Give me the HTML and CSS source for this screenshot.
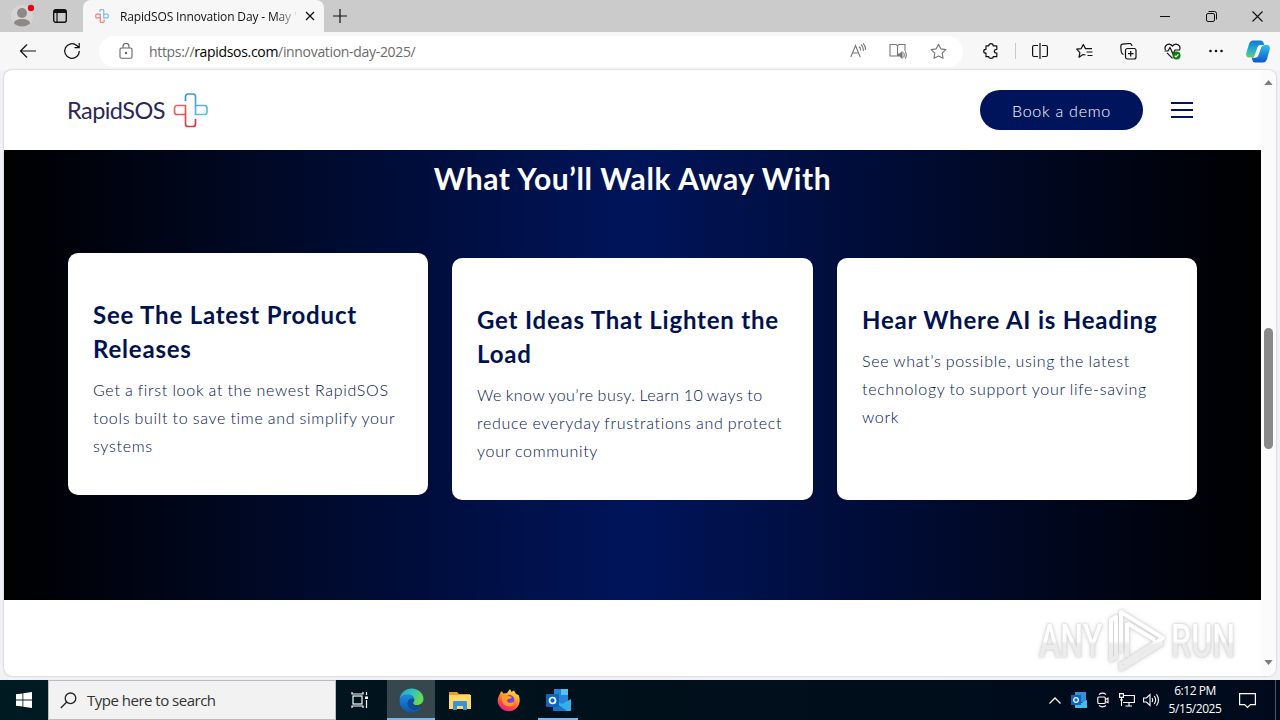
FILE: index.html
```html
<!DOCTYPE html>
<html lang="en">

<head>
    <meta charset="UTF-8">
    <meta name="viewport" content="width=device-width, initial-scale=1.0">
    <link rel="stylesheet" href="styles.css">
    <title>RapidSOS Innovation Day</title>
</head>

<body>
    <div class="tabbar">
        <div class="profile">
            <svg width="24" height="24" viewBox="0 0 24 24"><circle cx="12" cy="12" r="11" fill="#d8d4d3"/><circle cx="12" cy="9" r="5" fill="#8c8988"/><path d="M4 19.500c0-3 3-4.500 8-4.500s8 1.500 8 4.500c-2 2-5 3-8 3s-6-1-8-3z" fill="#8c8988"/><circle cx="21" cy="4" r="3.200" fill="#e30613"/></svg>
        </div>
        <div class="workspaces">
            <svg width="16" height="16" viewBox="0 0 16 16" fill="none" stroke="#111"><rect x="1.700" y="1.700" width="12.600" height="12.600" rx="2" stroke-width="1.400"/><path d="M2 3.500h12" stroke-width="3"/><path d="M5 3v11" stroke-width="1.200"/></svg>
        </div>
        <div class="tab">
            <svg width="14" height="14" viewBox="0 0 36 36" fill="none" stroke-width="3" opacity=".85"><path d="M12.500 8V4a2.500 2.500 0 0 1 2.500-2.500h5A2.500 2.500 0 0 1 22.500 4v19h9a2.500 2.500 0 0 0 2.500-2.500v-5a2.500 2.500 0 0 0-2.500-2.500h-9" stroke="#58b9de"/><path d="M23.500 27v5a2.500 2.500 0 0 1-2.500 2.500h-5a2.500 2.500 0 0 1-2.500-2.500V13h-9A2.500 2.500 0 0 0 2 15.500v5A2.500 2.500 0 0 0 4.500 23h9" stroke="#ef6669"/></svg>
            <span class="tab-title">RapidSOS Innovation Day - May '</span>
            <svg width="10" height="10" viewBox="0 0 10 10" stroke="#111" stroke-width="1.300"><path d="M1 1l8 8M9 1l-8 8"/></svg>
        </div>
        <svg class="new-tab" width="14" height="14" viewBox="0 0 14 14" stroke="#111" stroke-width="1.200"><path d="M7 0v14M0 7h14"/></svg>
        <div class="window-buttons">
            <span><svg width="10" height="10" viewBox="0 0 10 10" stroke="#111"><path d="M0 5.500h10"/></svg></span>
            <span><svg width="11" height="11" viewBox="0 0 11 11" fill="none" stroke="#111"><rect x=".5" y="2.500" width="8" height="8" rx="1.500"/><path d="M2.500 .5H8.500a2 2 0 0 1 2 2V8.500"/></svg></span>
            <span><svg width="11" height="11" viewBox="0 0 11 11" stroke="#111" stroke-width="1.100"><path d="M.5 .5l10 10M10.500 .5l-10 10"/></svg></span>
        </div>
    </div>

    <div class="toolbar">
        <span class="tool"><svg width="18" height="18" viewBox="0 0 18 18" fill="none" stroke="#111" stroke-width="1.200"><path d="M17 9H1.500M8 2.500L1.500 9 8 15.500"/></svg></span>
        <span class="tool"><svg width="18" height="18" viewBox="0 0 18 18" fill="none" stroke="#111" stroke-width="1.200"><path d="M16.300 9a7.300 7.300 0 1 1-2.500-5.500L16 5.500M16.200 1v4.700h-4.700"/></svg></span>
        <div class="address">
            <svg class="lock" width="14" height="16" viewBox="0 0 14 16" fill="none" stroke="#666" stroke-width="1.100"><rect x="1" y="5" width="12" height="10.200" rx="1.500"/><path d="M4 5V3.500a3 3 0 0 1 6 0V5"/><circle cx="7" cy="10" r=".7" fill="#666"/></svg>
            <span class="url">https://<b>rapidsos.com</b>/innovation-day-2025/</span>
            <span class="page-tool"><svg width="16" height="16" viewBox="0 0 16 16" fill="none" stroke="#777" stroke-width="1.100"><path d="M.8 14L5.500 2.500 10.200 14M2.500 10h6M9 3.500q2 1.500 1.500 4M11 1.500q3 2.500 2.200 6.500M13 .3q3 3 2.300 6.500"/></svg></span>
            <span class="page-tool"><svg width="18" height="16" viewBox="0 0 18 16" fill="none" stroke="#777" stroke-width="1.100"><path d="M8.500 2v11M8.500 13H1V1.500h6l1.500 1L10 1.500h6V8"/><path d="M9 11h2l2-2v6l-2-2H9z" fill="#777"/><path d="M14.500 9.500q1.500 2.500 0 5M16.300 8.500q2 3.500 0 7"/></svg></span>
            <span class="page-tool"><svg width="17" height="17" viewBox="0 0 18 18" fill="none" stroke="#777" stroke-width="1.200" stroke-linejoin="round"><path d="M9 1.300l2.400 4.900 5.400.8-3.900 3.800.9 5.400L9 13.700l-4.800 2.500.9-5.400L1.200 7l5.400-.8z"/></svg></span>
        </div>
        <span class="tool"><svg width="16" height="16" viewBox="0 0 16 16" fill="none" stroke="#111" stroke-width="1.200" stroke-linejoin="round"><path d="M3 2.800h2.800C5.800 1.500 6.700.7 8 .7s2.200.8 2.200 2.100h3.600v3.500c-1.600 0-2.500.7-2.500 1.900s.9 1.900 2.500 1.900v3.600h-3.600c0 .9-.8 1.600-2.200 1.600s-2.200-.7-2.200-1.600H3v-3.500C1.500 10.200.7 9.500.7 8.200S1.500 6.300 3 6.300z"/></svg></span>
        <span class="divider"></span>
        <span class="tool"><svg width="16" height="16" viewBox="0 0 16 16" fill="none" stroke="#111" stroke-width="1.200"><path d="M6 2.500H2Q.6 2.500 .6 4v8q0 1.500 1.400 1.500h4M10 2.500h4q1.400 0 1.400 1.500v8q0 1.500-1.400 1.500h-4M8 0v16"/></svg></span>
        <span class="tool"><svg width="17" height="16" viewBox="0 0 17 16" fill="none" stroke="#111" stroke-width="1.200" stroke-linejoin="round"><path d="M9.500 12L7 11.500 3 14.200l.9-4.600L.7 6.200l4.500-.6L7.300 1.500l2.200 4.100H16M10.500 9h6M11.500 12.500h5"/></svg></span>
        <span class="tool"><svg width="17" height="17" viewBox="0 0 17 17" fill="none" stroke="#111" stroke-width="1.200"><rect x="5.500" y="5.500" width="10.500" height="10.500" rx="2"/><path d="M10.700 8v5.500M8 10.700h5.500M3.500 11.500Q1.500 10.500 1.200 8.500L.8 3.500Q.7 1.500 2.500 1.200l7-.7q2-.1 2.500 2.500"/></svg></span>
        <span class="tool"><svg width="17" height="17" viewBox="0 0 17 17" fill="none" stroke="#111" stroke-width="1.200"><path d="M1.500 7C-.5 2.500 5-1 8.500 3 12-1 17.500 2.500 15.500 7M3 9.800l5.500 5.500M.5 8H4l2-3.500L9 11l2-4h5"/><circle cx="12.500" cy="12.500" r="4" fill="#107c10" stroke="none"/><path d="M10.700 12.700l1.300 1.200 2.400-2.500" stroke="#fff"/></svg></span>
        <span class="tool"><svg width="14" height="4" viewBox="0 0 14 4" fill="#111"><circle cx="1.500" cy="2" r="1.300"/><circle cx="7" cy="2" r="1.300"/><circle cx="12.500" cy="2" r="1.300"/></svg></span>
        <span class="copilot"><svg width="24" height="23" viewBox="0 0 24 23">
            <defs>
                <linearGradient id="cp1" x1="0" y1="0" x2="0" y2="1"><stop offset="0" stop-color="#1476d2"/><stop offset=".5" stop-color="#20acd0"/><stop offset="1" stop-color="#63d16b"/></linearGradient>
                <linearGradient id="cp2" x1="0" y1="0" x2="0" y2="1"><stop offset="0" stop-color="#2cc4ed"/><stop offset="1" stop-color="#1453c9"/></linearGradient>
            </defs>
            <path d="M7 .5h8q2 0 2.700 2.500l.5 2h-4q-2 0-2.700 2.500L9 15q-.8 2.500-3 2.500H3Q-.5 17.500.3 13L3 4Q4.200.5 7 .5z" fill="url(#cp1)"/>
            <path d="M17 22.500H9q-2 0-2.700-2.500l-.5-2.500h3.500q2.200 0 3-2.500L15 7.500Q15.700 5 18 5h3q3.500 0 2.700 4.500L21 19q-1.200 3.500-4 3.500z" fill="url(#cp2)"/>
            <path d="M11.500 7.500Q12.300 5 14.500 5H18q-2.300.3-3 2.500L12.500 15q-.8 2.500-3.200 2.500H6q2.300 0 3-2.500z" fill="#f5fbff"/>
        </svg></span>
    </div>

    <div class="viewport">
        <div class="page">
            <header>
                <div class="brand">
                    <span>RapidSOS</span>
                    <svg width="36" height="36" viewBox="0 0 36 36" fill="none" stroke-width="1.700">
                        <defs>
                            <linearGradient id="blue" x1="0" y1="0" x2="1" y2="1"><stop offset="0" stop-color="#3b8fce"/><stop offset="1" stop-color="#5fc5e0"/></linearGradient>
                            <linearGradient id="red" x1="0" y1="0" x2="1" y2="1"><stop offset="0" stop-color="#f26a64"/><stop offset="1" stop-color="#cf3040"/></linearGradient>
                        </defs>
                        <path d="M12.500 9V4.500a2.500 2.500 0 0 1 2.500-2.500h5A2.500 2.500 0 0 1 22.500 4.500V22.500h9a2.500 2.500 0 0 0 2.500-2.500v-4a2.500 2.500 0 0 0-2.500-2.500h-9" stroke="url(#blue)"/>
                        <path d="M22.500 27v5a2.500 2.500 0 0 1-2.500 2.500h-5a2.500 2.500 0 0 1-2.500-2.500V13.500h-8.500A2.500 2.500 0 0 0 1.500 16v4a2.500 2.500 0 0 0 2.500 2.500h8.500" stroke="url(#red)"/>
                    </svg>
                </div>
                <a class="demo">Book a demo</a>
                <div class="menu"><i></i><i></i><i></i></div>
            </header>
            <section class="takeaways">
                <h2>What You’ll Walk Away With</h2>
                <div class="cards">
                    <div class="card raised">
                        <h3>See The Latest Product<br>Releases</h3>
                        <p>Get a first look at the newest RapidSOS<br>tools built to save time and simplify your<br>systems</p>
                    </div>
                    <div class="card">
                        <h3>Get Ideas That Lighten the<br>Load</h3>
                        <p><span class="tight">We know you’re busy. Learn 10 ways to</span><br>reduce everyday frustrations and protect<br>your community</p>
                    </div>
                    <div class="card">
                        <h3>Hear Where AI is Heading</h3>
                        <p>See what’s possible, using the latest<br>technology to support your life-saving<br>work</p>
                    </div>
                </div>
            </section>
        </div>
        <div class="scrollbar">
            <svg width="9" height="5" viewBox="0 0 10 6" fill="#7d7d7d"><path d="M5 0l5 6H0z"/></svg>
            <div class="thumb"></div>
            <svg width="9" height="5" viewBox="0 0 10 6" fill="#7d7d7d"><path d="M0 0h10L5 6z"/></svg>
        </div>
        <div class="watermark">
            <span>ANY</span>
            <svg width="60" height="64" viewBox="0 0 60 64" fill="none" stroke="url(#fade)" stroke-width="4" stroke-linejoin="round">
                <defs><linearGradient id="fade" gradientUnits="userSpaceOnUse" x1="0" y1="0" x2="0" y2="64"><stop offset=".5" stop-color="#fff"/><stop offset=".55" stop-color="#ececec"/></linearGradient></defs>
                <path d="M14 43V3l42 26L16 54M20 14v34M20 14l28 17M14 53v7l42-26M4 51V11l5-3v40z"/>
            </svg>
            <span>RUN</span>
        </div>
    </div>

    <div class="taskbar">
        <span class="start"><svg width="16" height="16" viewBox="0 0 16 16" fill="#fff"><path d="M0 2.300l6.500-.9v6.200H0zM7.300 1.300L16 0v7.600H7.300zM0 8.400h6.500v6.200L0 13.700zM7.300 8.400H16V16l-8.700-1.300z"/></svg></span>
        <div class="search">
            <svg width="17" height="17" viewBox="0 0 17 17" fill="none" stroke="#222" stroke-width="1.300"><circle cx="10.500" cy="6.300" r="5.300"/><path d="M6.800 10L.8 16"/></svg>
            <span>Type here to search</span>
        </div>
        <span class="app taskview"><svg width="18" height="16" viewBox="0 0 18 16" fill="none" stroke="#fff" stroke-width="1.200"><rect x="2" y="4" width="9" height="8"/><path d="M1 0v2h11V0M1 16v-2h11v2M15.500 0v3M15.500 8v8"/><path d="M14 4.500h3v2.500h-3z" fill="#fff" stroke="none"/></svg></span>
        <span class="app active"><svg width="25" height="25" viewBox="0 0 24 24">
            <defs>
                <linearGradient id="edge1" x1="0" y1="0" x2="1" y2=".4"><stop offset="0" stop-color="#269fdd"/><stop offset=".55" stop-color="#2fc5bb"/><stop offset="1" stop-color="#69dc50"/></linearGradient>
                <linearGradient id="edge2" x1="0" y1="0" x2="0" y2="1"><stop offset="0" stop-color="#1b8be0"/><stop offset="1" stop-color="#0d54ad"/></linearGradient>
            </defs>
            <path d="M.5 11C1.500 4.500 6.300.5 12 .5c7 0 11.500 5 11.500 9.800 0 4-3 6-6 6-2.500 0-4-1-4-2 0-.8 1.200-1.300 1.200-3.300C14.700 8.500 12 6.500 8.500 6.500 4.500 6.500 1.500 8.500.5 11z" fill="url(#edge1)"/>
            <path d="M.5 12C1 8.500 4.500 6.500 8.500 6.500c3.500 0 6 2 6.200 4.300C13 9.500 9 10 8.300 14c-.5 4.500 4 8 8.700 6.700 2-.5 3.800-1.700 4.500-1.500C19.500 22 16 23.500 12 23.500 5.500 23.500.3 18.500.5 12z" fill="url(#edge2)"/>
            <path d="M14.700 11C13 9.500 9 10 8.300 14c-.5 4.500 4 8 8.700 6.700 2-.5 4-1.500 4.800-3.200-2.800 1.200-8.600.4-8.300-3.200 0-.8 1.200-1.300 1.200-3.300z" fill="#0f4c99"/>
        </svg></span>
        <span class="app"><svg width="22" height="19" viewBox="0 0 22 19"><path d="M0 1h8l2 2h11v4H0z" fill="#e9a11b"/><path d="M0 4h22v14H0z" fill="#ffd869"/><path d="M4 11q0-1 1-1h12q1 0 1 1v8h-4v-4H8v4H4z" fill="#3c93d4"/></svg></span>
        <span class="app"><svg width="24" height="24" viewBox="0 0 24 24">
            <defs><linearGradient id="fox" x1=".8" y1="0" x2=".3" y2="1"><stop offset="0" stop-color="#fff24a"/><stop offset=".4" stop-color="#ff9f22"/><stop offset=".75" stop-color="#ff3d4d"/><stop offset="1" stop-color="#e3208c"/></linearGradient></defs>
            <path d="M3 5.500L4.500 3l2 2.500 3.500-.5 3-4 1.500 3L17 2.500 19 6l2.500 1C24 12 22.500 18 18.500 21S9 24 5 21 0 14 1 10z" fill="url(#fox)"/><circle cx="12" cy="12" r="5.300" fill="#7643d5"/><path d="M5 7.500q4-2 7 .5l3 1q-1.500 2.500-4 2-2 2 .5 3.500 3 1 5-1 1 5-4.500 5-6-.5-7-6z" fill="#ff9929"/>
        </svg></span>
        <span class="app open"><svg width="25" height="22" viewBox="0 0 25 22"><rect x="8" y="0" width="14" height="17" fill="#2486d8"/><path d="M15 0h7v6h-7z" fill="#54c1f2"/><path d="M7 10l9 5 9-5v12H7z" fill="#35aee9"/><path d="M7 12l14 10H7z" fill="#1674c7"/><rect y="5" width="13" height="13" rx="1" fill="#0f65bd"/><circle cx="6.500" cy="11.500" r="3" fill="none" stroke="#fff" stroke-width="1.700"/></svg></span>
        <div class="tray">
            <span><svg width="12" height="7" viewBox="0 0 12 7" fill="none" stroke="#fff" stroke-width="1.300"><path d="M.5 6.500L6 1l5.500 5.500"/></svg></span>
            <span><svg width="16" height="16" viewBox="0 0 16 16"><path d="M4 0h11v10H4z" fill="#2f91dd"/><path d="M4 8l6 3 6-3v8H4z" fill="#45bbee"/><rect y="3" width="10" height="10" fill="#0d66bd"/><circle cx="5" cy="8" r="2.300" fill="none" stroke="#fff" stroke-width="1.300"/></svg></span>
            <span><svg width="12" height="16" viewBox="0 0 12 16" fill="none" stroke="#fff" stroke-width="1.100"><rect x=".8" y="5" width="7.500" height="6.500" rx="1"/><path d="M8.500 7.500l2.500-1.300v4.500L8.500 9.500M2 2.500Q5.500-.2 9 2.500M2 13.500q3.500 2.700 7 0"/></svg></span>
            <span><svg width="16" height="14" viewBox="0 0 16 14" fill="none" stroke="#fff" stroke-width="1.100"><path d="M5 2.500h10.400v7H4M10 9.500V13M6.500 13h6.500M.6 .6h3.800v3.800H.6zM2.500 4.500V13M1 7h3"/></svg></span>
            <span><svg width="17" height="14" viewBox="0 0 17 14" fill="none" stroke="#fff" stroke-width="1.100"><path d="M.6 5h2.800L7 1.500v11L3.400 9H.6zM9 5q1.300 2 0 4M11.300 3q2.700 4 0 8M13.500 1.300q4 5.700 0 11.400"/></svg></span>
        </div>
        <div class="clock">6:12 PM<br>5/15/2025</div>
        <span class="notifications"><svg width="17" height="17" viewBox="0 0 17 17" fill="none" stroke="#fff" stroke-width="1.200"><path d="M.6 1.600h15.800v11h-5L8.500 15.500 5.600 12.600H.6z"/></svg></span>
    </div>
</body>

</html>
```
FILE: styles.css
```css
* {
    box-sizing: border-box;
}

body {
    margin: 0;
    width: 1280px;
    height: 720px;
    overflow: hidden;
    display: flex;
    flex-direction: column;
    background-color: #f1f2f6;
    font-family: 'Open Sans', sans-serif;
}

svg {
    display: block;
    flex: none;
}

/* browser chrome */
.tabbar {
    height: 32px;
    display: flex;
    align-items: center;
    background-color: #cbcbcb;
    flex: none;
}

.profile {
    width: 44px;
    padding-left: 10px;
}

.workspaces {
    width: 39px;
    padding-left: 8px;
}

.tab {
    width: 241px;
    height: 32px;
    padding: 0 11px 0 12px;
    display: flex;
    align-items: center;
    background-color: #f7f7f7;
    border-radius: 8px 8px 0 0;
}

.tab-title {
    width: 178px;
    margin: 0 9px 0 11px;
    white-space: nowrap;
    font-size: 12px;
    letter-spacing: -0.15px;
    color: #111;
    -webkit-mask-image: linear-gradient(to right, #000 155px, transparent 180px);
    mask-image: linear-gradient(to right, #000 155px, transparent 180px);
}

.new-tab {
    margin-left: 9px;
}

.window-buttons {
    display: flex;
    margin-left: auto;
}

.window-buttons span {
    width: 46px;
    display: flex;
    justify-content: center;
}

.toolbar {
    height: 38px;
    padding-left: 6px;
    display: flex;
    align-items: center;
    background-color: #f7f7f7;
    flex: none;
}

.tool {
    width: 44px;
    display: flex;
    justify-content: center;
}

.address {
    width: 864px;
    height: 31px;
    margin: 0 6px 0 5px;
    padding: 0 5px 0 20px;
    display: flex;
    align-items: center;
    background-color: #fff;
    border-radius: 16px;
}

.url {
    flex: 1;
    margin-left: 16px;
    font-size: 14px;
    letter-spacing: -0.32px;
    color: #6b6b6b;
}

.url b {
    font-weight: normal;
    color: #000;
}

.page-tool {
    width: 40px;
    display: flex;
    justify-content: center;
}

.divider {
    width: 1px;
    height: 16px;
    margin: 0 2px;
    background-color: #c8c8c8;
}

.copilot {
    width: 40px;
    display: flex;
    justify-content: center;
}

/* page */
.viewport {
    position: relative;
    width: 1272px;
    height: 606px;
    margin: 0 0 4px 4px;
    display: flex;
    overflow: hidden;
    background-color: #fff;
    border-radius: 8px;
    box-shadow: 0 0 2px #aaa;
    flex: none;
}

.page {
    width: 1257px;
}

header {
    height: 80px;
    padding: 0 68px 0 63px;
    display: flex;
    align-items: center;
}

.brand {
    display: flex;
    align-items: center;
    margin-right: auto;
    font-family: 'Lato', sans-serif;
    font-size: 23.5px;
    letter-spacing: -0.55px;
    color: #2b2858;
}

.brand span {
    width: 106px;
}

.demo {
    width: 163px;
    height: 40px;
    padding-top: 1px;
    border-radius: 20px;
    background-color: #00145c;
    color: #fff;
    font-family: 'Lato', sans-serif;
    font-size: 16px;
    font-weight: 300;
    line-height: 40px;
    letter-spacing: 0.75px;
    text-align: center;
}

.menu {
    width: 22px;
    margin-left: 28px;
    display: flex;
    flex-direction: column;
    gap: 5px;
}

.menu i {
    height: 2px;
    background-color: #00145c;
}

.takeaways {
    height: 450px;
    padding: 8px 64px 0;
    background: linear-gradient(to right, #000 0%, #00145a 50%, #000 100%);
    font-family: 'Lato', sans-serif;
}

h2 {
    margin: 0;
    color: #fff;
    font-size: 30px;
    line-height: 40px;
    letter-spacing: 0.6px;
    text-align: center;
}

.cards {
    display: grid;
    grid-template-columns: 360px 361px 360px;
    gap: 24px;
    margin-top: 60px;
}

.card {
    height: 242px;
    padding: 45px 0 0 25px;
    background-color: #fff;
    border-radius: 10px;
    color: #00124f;
    white-space: nowrap;
}

.raised {
    margin-top: -5px;
}

h3 {
    margin: 0 0 10px;
    font-size: 24px;
    line-height: 34px;
    letter-spacing: 0.8px;
}

.card p {
    margin: 0;
    font-size: 16px;
    font-weight: 300;
    line-height: 28px;
    letter-spacing: 0.7px;
    word-spacing: -0.7px;
}

.card .tight {
    letter-spacing: 0.45px;
}

.scrollbar {
    width: 15px;
    padding: 10px 0 11px;
    display: flex;
    flex-direction: column;
    align-items: center;
    background-color: #fbfbfb;
}

.thumb {
    width: 9px;
    height: 121px;
    margin: 243px 0 auto;
    border-radius: 5px;
    background-color: #898989;
}

.watermark {
    position: absolute;
    left: 1035px;
    top: 539px;
    display: flex;
    align-items: center;
    color: #fff;
    font-family: 'Roboto', sans-serif;
    font-size: 46px;
    font-weight: 500;
    filter: drop-shadow(0 0 1px #ccc) drop-shadow(0 0 2px #ddd);
}

.watermark span {
    width: 90px;
    margin-right: -22px;
    transform: scaleX(0.7);
    transform-origin: left;
    background: linear-gradient(#fff 50%, #ececec 55%);
    -webkit-background-clip: text;
    background-clip: text;
    color: transparent;
}

.watermark svg {
    margin-right: 4px;
}

/* taskbar */
.taskbar {
    height: 40px;
    display: flex;
    align-items: center;
    background: linear-gradient(to right, #001a22, #00101b 50%, #000a1c);
    color: #fff;
}

.start,
.app,
.notifications {
    width: 48px;
    height: 40px;
    display: flex;
    align-items: center;
    justify-content: center;
}

.search {
    width: 288px;
    height: 40px;
    padding-left: 11px;
    display: flex;
    align-items: center;
    gap: 10px;
    background-color: #f2f2f2;
    border: 1px solid #bcbcbc;
    color: #333;
    font-size: 15px;
    letter-spacing: -0.5px;
}

.app {
    margin-right: 1px;
}

.taskview {
    margin-right: 3px;
}

.active {
    background-color: #36474e;
    box-shadow: inset 0 -2px #76b9ed;
}

.open {
    width: 40px;
    margin: 0 4px;
    box-shadow: inset 0 -2px #76b9ed;
}

.tray {
    display: flex;
    align-items: center;
    margin-left: auto;
}

.tray span {
    width: 24px;
    display: flex;
    justify-content: center;
}

.clock {
    width: 64px;
    font-size: 12px;
    line-height: 18px;
    letter-spacing: -0.45px;
    text-align: center;
}

.notifications {
    width: 49px;
    padding-right: 8px;
    margin-right: 4px;
    border-right: 1px solid #4d5664;
}
```
